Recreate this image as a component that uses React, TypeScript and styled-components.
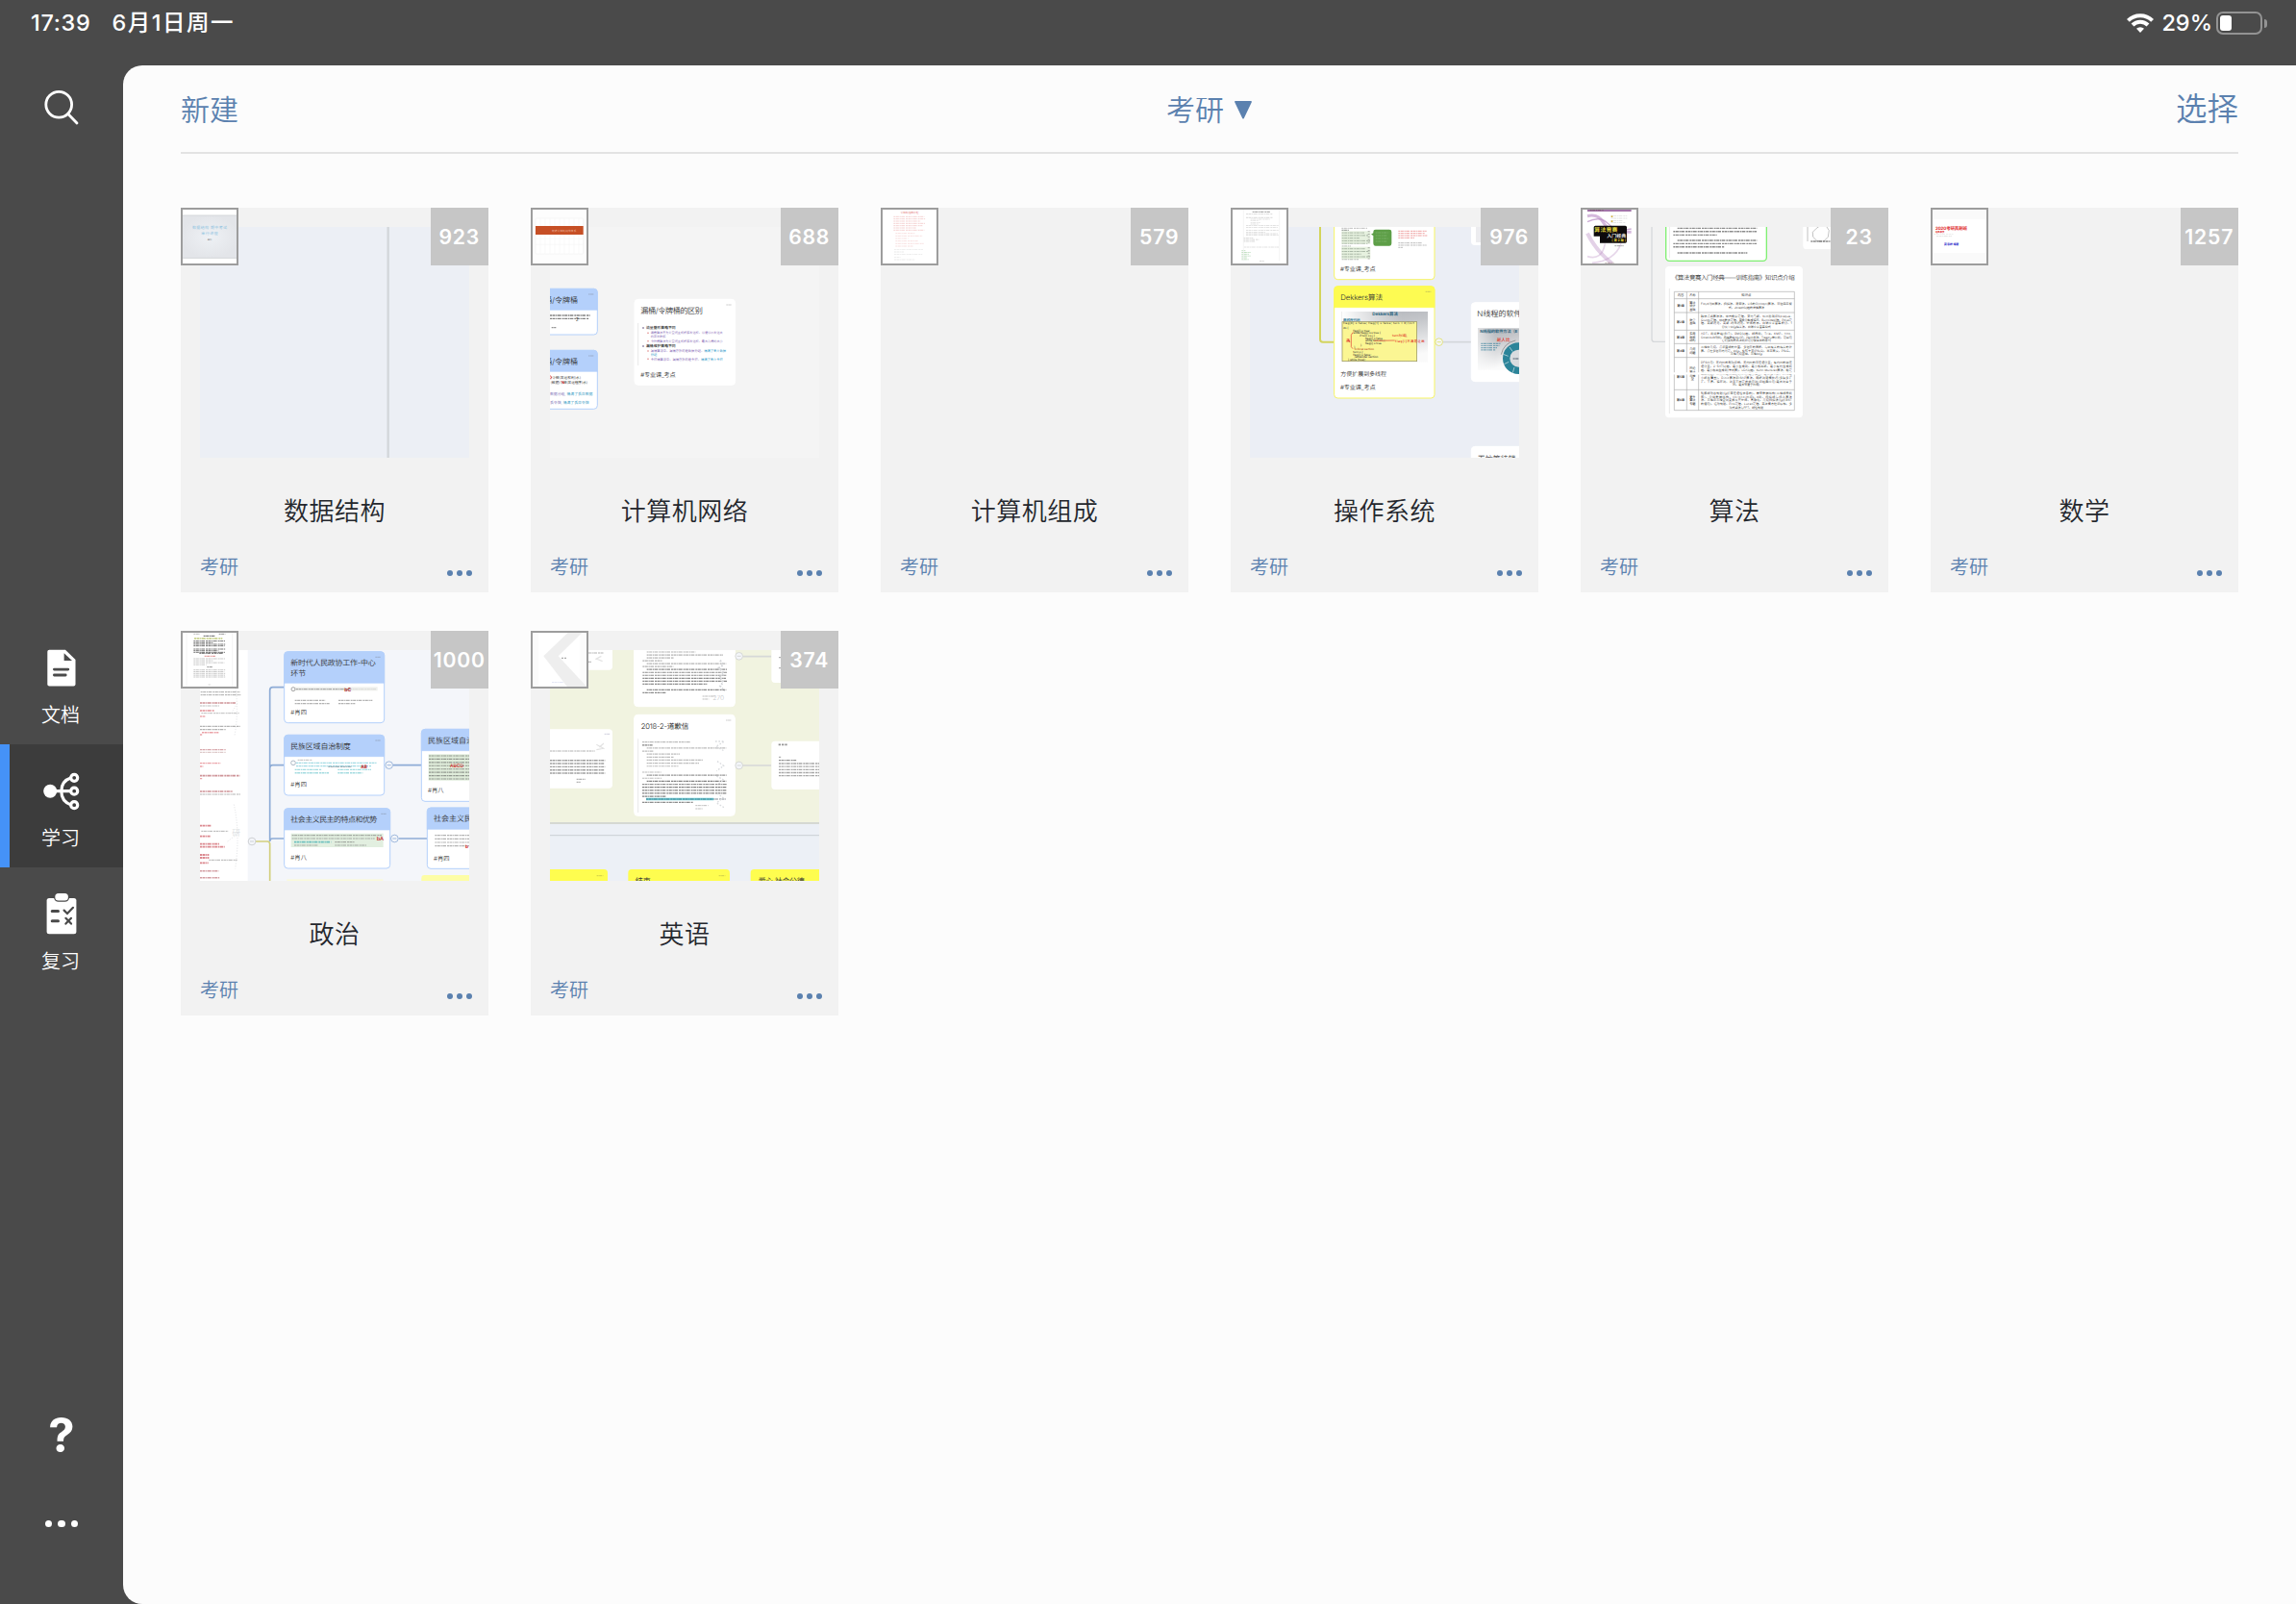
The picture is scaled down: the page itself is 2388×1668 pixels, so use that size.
import React from "react";
import styled, { createGlobalStyle } from "styled-components";

const FONT = `Inter, "Noto Sans CJK SC", sans-serif`;
const LINK = "#5b81af";

const GlobalStyle = createGlobalStyle`
  * { box-sizing: border-box; }
  html, body { margin: 0; padding: 0; }
  body { background: #4a4a4a; font-family: ${FONT}; -webkit-font-smoothing: antialiased; }
`;

/* ---------- shell ---------- */

const Screen = styled.div`
  display: grid;
  grid-template: 68px 1fr / 128px 1fr;
  width: 2388px;
  height: 1668px;
  overflow: hidden;
  background: #4a4a4a;
`;

const StatusBar = styled.header`
  grid-column: 1 / -1;
  display: flex;
  justify-content: space-between;
  height: 48px;
  padding: 0 30px 0 32px;
  color: #fff;
  font-size: 23.5px;
  font-weight: 500;
  line-height: 48px;
`;

const StatusGroup = styled.div<{ $gap: number }>`
  display: flex;
  align-items: center;
  gap: ${(p) => p.$gap}px;
`;

const Clock = styled.span`
  letter-spacing: 0.7px;
`;

const DateText = styled.span`
  font-weight: 450;
  letter-spacing: 1.5px;
`;

const Battery = styled.span`
  display: flex;
  align-items: center;
  gap: 2px;
  margin-left: -4px;
`;

const BatteryShell = styled.span`
  display: block;
  width: 48px;
  height: 24px;
  padding: 2px;
  border: 2px solid #939393;
  border-radius: 7px;
`;

const BatteryLevel = styled.span`
  display: block;
  width: 12px;
  height: 16px;
  border-radius: 3px;
  background: #fff;
`;

const BatteryTip = styled.span`
  width: 3px;
  height: 9px;
  border-radius: 0 4px 4px 0;
  background: #939393;
`;

const Sidebar = styled.nav`
  display: flex;
  flex-direction: column;
  color: #fff;
`;

const SearchButton = styled.div`
  display: flex;
  justify-content: center;
  height: 578px;
  padding-top: 25px;
`;

const NavItem = styled.div<{ $active?: boolean }>`
  display: flex;
  flex-direction: column;
  align-items: center;
  height: 128px;
  padding: 25px 10px 0 0;
  border-left: 10px solid ${(p) => (p.$active ? "#4592f7" : "transparent")};
  background: ${(p) => (p.$active ? "#3c3c3c" : "transparent")};
  background-clip: padding-box;
`;

const NavLabel = styled.span`
  margin: 13px 2px 0 0;
  font-size: 20px;
  font-weight: 350;
  line-height: 24px;
`;

const SidebarFoot = styled.div`
  display: flex;
  flex: 1;
  flex-direction: column;
  align-items: center;
  justify-content: flex-end;
  padding-bottom: 80px;
`;

const Help = styled.span`
  margin-bottom: 62px;
  font-size: 49px;
  font-weight: 700;
  line-height: 52px;
`;

const Dots = styled.span<{ $size: number; $gap: number; $color: string }>`
  display: flex;
  gap: ${(p) => p.$gap}px;
  &::before, &::after, & > i {
    content: "";
    width: ${(p) => p.$size}px;
    height: ${(p) => p.$size}px;
    border-radius: 50%;
    background: ${(p) => p.$color};
  }
`;

const Main = styled.main`
  padding: 0 60px;
  border-radius: 20px 0 0 20px;
  background: #fcfcfc;
`;

const Toolbar = styled.div`
  display: grid;
  grid-template-columns: 1fr auto 1fr;
  align-items: center;
  height: 92px;
  border-bottom: 2px solid #e3e3e3;
  color: ${LINK};
  font-size: 30px;
  font-weight: 350;
  line-height: 92px;
`;

const FolderPicker = styled.div`
  display: flex;
  align-items: center;
  gap: 10px;
`;

const SelectButton = styled.span`
  justify-self: end;
  font-size: 32.5px;
`;

const Shelf = styled.section`
  display: grid;
  grid-template-columns: repeat(6, 320px);
  gap: 40px 44px;
  padding-top: 56px;
`;

/* ---------- notebook card ---------- */

const Card = styled.article`
  position: relative;
  display: flex;
  flex-direction: column;
  height: 400px;
  padding: 20px 20px 0;
  background: #f2f2f2;
`;

const Preview = styled.div<{ $bg: string }>`
  height: 240px;
  overflow: hidden;
  background: ${(p) => p.$bg};
  & > svg { display: block; }
`;

const Cover = styled.div`
  position: absolute;
  top: 0;
  left: 0;
  width: 60px;
  height: 60px;
  background: #fff;
  & > svg { display: block; }
  &::after {
    content: "";
    position: absolute;
    inset: 0;
    border: 2px solid #9d9d9d;
  }
`;

const Count = styled.div`
  position: absolute;
  top: 0;
  right: 0;
  width: 60px;
  height: 60px;
  background: #c6c6c6;
  color: #fff;
  font-size: 21.2px;
  font-weight: 600;
  letter-spacing: 0.8px;
  line-height: 61px;
  text-align: center;
  text-indent: -0.6px;
  white-space: nowrap;
`;

const Title = styled.h2`
  height: 72px;
  margin: 20px 0 0;
  color: #24272d;
  font-size: 26px;
  font-weight: 350;
  letter-spacing: 0.5px;
  line-height: 72px;
  text-align: center;
`;

const CardFoot = styled.div`
  display: flex;
  justify-content: space-between;
  color: ${LINK};
  font-size: 20px;
  font-weight: 350;
  line-height: 44px;
`;

const MoreButton = styled.span`
  display: flex;
  margin: 24.5px -3px 0 0;
`;

/* ---------- drawing helpers (thumbnail units are thirds of a pixel) ---------- */

type XY = { x: number; y: number };

const T = ({ x, y, s, c = "#333", w = 350, len, a, children }: XY & { s: number; c?: string; w?: number; len?: number; a?: "middle" | "end"; children: React.ReactNode }) => (
  <text x={x} y={y} fontSize={s} fill={c} fontWeight={w} textLength={len} textAnchor={a} fontFamily={FONT} textRendering="geometricPrecision">{children}</text>
);

/** A run of print too small to read: a dashed bar with uneven words. */
const Row = ({ x, y, w, c = "#777", h = 4.5, o = 0.75, d = "6 1.5 9 2 4 1.5 11 3" }: XY & { w: number; c?: string; h?: number; o?: number; d?: string }) => (
  <line x1={x} y1={y} x2={x + w} y2={y} stroke={c} strokeWidth={h * 0.85} opacity={o * 0.75} strokeDasharray={d} />
);

const Rows = ({ x, y, widths, step, ...rest }: XY & { widths: number[]; step: number; c?: string; h?: number; o?: number }) => (
  <g>{widths.map((w, i) => <Row key={i} x={x} y={y + i * step} w={w} {...rest} />)}</g>
);

const Node = ({ x, y, w, h, head = 0, color = "#fff", stroke = "#fff" }: XY & { w: number; h: number; head?: number; color?: string; stroke?: string }) => (
  <g>
    <rect x={x} y={y} width={w} height={h} rx={11} fill="#fff" stroke={stroke} strokeWidth={3} />
    {head > 0 && <path d={`M${x} ${y + head}V${y + 11}q0-11 11-11H${x + w - 11}q11 0 11 11V${y + head}z`} fill={color} stroke={color} strokeWidth={2} />}
    <Row x={x + w - 28} y={y + 17} w={17} h={2.5} c="#666" o={0.6} d="5 1 9 1" />
  </g>
);

const Joint = ({ x, y, c }: XY & { c: string }) => (
  <g fill="#f4f6fa" stroke={c} strokeWidth={2.5}>
    <circle cx={x} cy={y} r={11.5} /><path d={`M${x - 6} ${y}h12`} />
  </g>
);

const Canvas = ({ box, children }: { box: string; children?: React.ReactNode }) => (
  <svg width="280" height="240" viewBox={box}>{children}</svg>
);

const CoverArt = ({ children, y = 48 }: { children: React.ReactNode; y?: number }) => (
  <svg width="60" height="60" viewBox={`24 ${y} 180 180`}>{children}</svg>
);

/* ---------- previews ---------- */

const DataStructurePreview = () => (
  <Canvas box="84 108 840 720"><path d="M671 108V828" stroke="#d3d6da" strokeWidth={7} /></Canvas>
);

const NetworkPreview = () => (
  <Canvas box="96 108 840 720">
    <Node x={60} y={301} w={184} h={143} head={66} color="#b4d0fb" stroke="#b4d0fb" />
    <T x={79} y={345} s={24}>桶/令牌桶</T>
    <Rows x={96} y={384} widths={[125, 122]} step={10} c="#222" h={5} />
    <T x={176} y={402} s={15} c="#222">2</T>
    <Row x={101} y={422} w={14} c="#444" />
    <Node x={60} y={493} w={184} h={183} head={66} color="#b4d0fb" stroke="#b4d0fb" />
    <T x={79} y={537} s={24}>桶/令牌桶</T>
    <T x={98} y={583} s={11} c="#222" len={94}>(令牌(发送权利)水)</T>
    <T x={98} y={597} s={11} c="#222" len={115}>(数据)令牌(发送程序)水)</T>
    <path d="M96 572l5 4-4 7M131 589l8 8-3-8" stroke="#d33" strokeWidth={2.5} fill="none" />
    <T x={96} y={633} s={11.5} c="#7b6fb5">数据分组, <tspan fill="#2f97c2">桶满了丢弃数据</tspan></T>
    <T x={96} y={659} s={11.5} c="#7b6fb5">丢令牌, <tspan fill="#2f97c2">桶满了丢弃令牌</tspan></T>
    <Node x={360} y={334} w={314} h={267} />
    <T x={379} y={379} s={24.5} len={194}>漏桶/令牌桶的区别</T>
    <path d="M371 408V540" stroke="#ddd" strokeWidth={2} />
    <T x={396} y={427} s={11.5} c="#222" w={500}>流量整形策略不同</T>
    <T x={410} y={442} s={9.4} c="#7b5cb0">漏桶算法不允许空闲主机积累发送权，以便以后发送大</T>
    <T x={410} y={453} s={9.4} c="#7b5cb0">的突发数据</T>
    <T x={410} y={467} s={9.4} c="#7b5cb0">令牌桶算法允许空闲主机积累发送权，最大为桶的大小</T>
    <T x={396} y={484} s={11.5} c="#222" w={500}>漏桶维护策略不同</T>
    <T x={410} y={499} s={9.8} c="#7b5cb0">漏桶算法中，漏桶存放的是数据分组，<tspan fill="#168fc4">桶满了丢弃数据</tspan></T>
    <T x={410} y={510} s={9.8} c="#168fc4">分组</T>
    <T x={410} y={524} s={9.8} c="#7b5cb0">令牌桶算法中，漏桶存放的是令牌，<tspan fill="#168fc4">桶满了丢弃令牌</tspan></T>
    {[423, 480].map((y) => <circle key={y} cx={387} cy={y} r={2.5} fill="#547" />)}
    {[439, 464, 495, 520].map((y) => <circle key={y} cx={402} cy={y} r={2.3} fill="#d77" />)}
    <T x={379} y={577} s={18.5} len={109}>#专业课_考点</T>
  </Canvas>
);

const SystemPreview = () => (
  <Canvas box="90 108 840 720">
    <path d="M309 100V458q0 9 9 9H352" stroke="#d3d45c" strokeWidth={6} fill="none" />
    <path d="M692 467H780" stroke="#d3d6da" strokeWidth={5} />
    <Node x={353} y={60} w={313} h={212} stroke="#f7f463" />
    <Rows x={376} y={112} widths={[80, 22]} step={6} h={3} />
    <rect x={376} y={121} width={90} height={40} fill="#e6f1df" />
    <rect x={376} y={170} width={90} height={38} fill="#e6f1df" />
    <Rows x={377} y={118} widths={[22, 70, 82, 55, 88, 80, 28, 72, 86, 60, 88, 52]} step={8.3} h={3} c="#687868" />
    <Rows x={458} y={122} widths={[6, 6, 6, 6, 6, 0, 6, 6, 6, 6, 6]} step={8.5} h={3} c="#666" />
    <path d="M482 116H525q7 0 7 7V160q0 7-7 7H482q-7 0-7-7V135l-7-4 7-4v-4q0-7 7-7z" fill="#5d9e47" />
    <Rows x={482} y={126} widths={[40, 38, 40, 36]} step={9} h={2} c="#b5d9a8" />
    <Rows x={553} y={121} widths={[88, 82, 90, 50]} step={7} h={3.5} c="#e45a5a" />
    <Rows x={553} y={158} widths={[76, 88, 14]} step={7} h={3} />
    <T x={372} y={247} s={18.5} len={110}>#专业课_考点</T>
    <Node x={353} y={293} w={313} h={349} head={66} color="#fdfb52" stroke="#f7f463" />
    <T x={373} y={336} s={23.5} len={132}>Dekkers算法</T>
    <defs>
      <linearGradient id="slide" x1="0" y1="0" x2="0.25" y2="1">
        <stop offset="0" stopColor="#b0b3b8" /><stop offset="0.35" stopColor="#c3c5c9" /><stop offset="1" stopColor="#fafafa" />
      </linearGradient>
      <linearGradient id="slideLeft" x1="0" x2="1"><stop offset="0" stopColor="#fff" /><stop offset="0.7" stopColor="#fff" stopOpacity="0" /></linearGradient>
    </defs>
    <rect x={376} y={372} width={269} height={158} fill="url(#slide)" />
    <rect x={376} y={372} width={269} height={158} fill="url(#slideLeft)" />
    <T x={472} y={385} s={13.5} c="#2c6580" w={700} len={80}>Dekkers算法</T>
    <T x={381} y={401} s={10.5} c="#357b98" w={700}>两线程代码</T>
    <rect x={378} y={404} width={233} height={123} fill="#fbf693" stroke="#8f8d58" strokeWidth={2} />
    <g>
      <T x={381} y={412} s={8.5} len={222} w={500}>flag[0] = false; flag[1] = false; turn = 0;//or1</T>
      <T x={381} y={427} s={8.5} w={500}>do {"{"}</T>
      <T x={412} y={434} s={8.5} w={500}>flag[i] = true;</T>
      <T x={412} y={442} s={8.5} w={500}>while flag[j] == true {"{"}</T>
      <T x={432} y={450} s={8.5} w={500}>if turn == j {"{"}</T>
      <T x={450} y={458} s={8.5} w={500}>flag[i] = false</T>
      <T x={450} y={466} s={8.5} w={500}>while turn == j ;</T>
      <T x={450} y={474} s={8.5} w={500}>flag[i] = true</T>
      <T x={435} y={479} s={8.5} w={500}>{"}"}</T>
      <T x={415} y={486} s={8.5} w={500}>{"}"}</T>
      <T x={416} y={493} s={8.5} c="#b63c22" w={500}>Critical section</T>
      <T x={412} y={502} s={8.5} w={500}>turn = j;</T>
      <T x={412} y={509} s={8.5} w={500}>flag[i] = false;</T>
      <T x={416} y={516} s={8.5} w={500}>remainder section</T>
      <T x={396} y={524} s={8.5} w={500}>{"}"} while (true);</T>
    </g>
    <g stroke="#df3b30" strokeWidth={2} fill="none"><path d="M411 437l-5 8v37l5 6M392 463h10M396 457l6 11M478 463l64-1" /></g>
    <T x={389} y={469} s={14} c="#df3b30">表</T>
    <T x={534} y={451} s={10} c="#e0281f" w={500}>turn为i或j,</T>
    <T x={543} y={467} s={10} c="#e0281f" w={500} len={92}>flag[i]不满足让出</T>
    <T x={373} y={573} s={18} len={143}>方便扩展到多线程</T>
    <T x={372} y={615} s={18.5} len={110}>#专业课_考点</T>
    <Joint x={680} y={467} c="#dedf68" />
    <rect x={780} y={60} width={200} height={105} rx={12} fill="#fff" />
    <rect x={795} y={108} width={30} height={48} fill="#ececef" />
    <Node x={781} y={344} w={200} h={246} />
    <T x={799} y={388} s={24}>N线程的软件方法</T>
    <rect x={801} y={424} width={130} height={130} fill="url(#slide)" />
    <rect x={801} y={424} width={80} height={130} fill="url(#slideLeft)" opacity={0.6} />
    <T x={808} y={438} s={12.5} c="#28617b" w={700}>N线程的软件方法（E</T>
    <T x={860} y={465} s={14} c="#e0352b" w={500}>是人比</T>
    <Rows x={811} y={472} widths={[62, 58, 50, 46]} step={6.5} c="#2b7896" h={4} />
    <path d="M874 506q8-36 45-44" stroke="#777" strokeWidth={2} fill="none" />
    <circle cx={928} cy={518} r={38} fill="#d9dcdf" stroke="#2b8499" strokeWidth={22} />
    <path d="M900 483l10 14M880 505l16 6M883 536l15-7M910 563l5-17" stroke="#d9e7eb" strokeWidth={2} />
    <Row x={911} y={519} w={20} c="#345" />
    <Node x={781} y={793} w={200} h={90} />
    <T x={800} y={839} s={24}>无忙等待锁</T>
  </Canvas>
);

const TABLE: { top: number; h: number; a: string; b: string[]; lines: string[] }[] = [
  { top: 332, h: 43, a: "第1章", b: ["算法", "设计", "基础"], lines: ["Floyd判圈算法、扫描法、滑窗法、LIS的O(nlogn)算法、双边四平衡", "式、Joseph问题的递推算法"] },
  { top: 375, h: 55, a: "第2章", b: ["数学", "基础"], lines: ["韩信点兵算法法、中国剩余定理、莫比乌斯、Nim游戏和Sprague-", "Grundy定理、母函数大定理、置换分解成循环、Burnside引理、Polya定", "理、高斯消元、高斯-约当消元、矩阵的幂、自适应辛普森积分、1", "分及至凸包相关法、自适应辛普森公式"] },
  { top: 430, h: 42, a: "第3章", b: ["实用", "数据", "结构"], lines: ["ADT、树状数组(BIT)、RMQ问题、线段树、Trie、KMP、Aho-", "Corasick自动机、后缀数组及LCP、Hash方法、Treap与伸展树、可以用", "它们实现的名次树和可分裂合并的序列"] },
  { top: 472, h: 43, a: "第4章", b: ["几何", "问题"], lines: ["二维中几何、点和直线的位置、多边形的面积、与圆有关的相关的计", "算、点在多边形内判定、凸包、旋转卡壳(PSLG)、半平面交、PSLG、", "三维几何基础、三维凸包"] },
  { top: 515, h: 101, a: "第5章", b: ["图论", "算法", "与模", "型"], lines: ["DFS应用：无向图的割顶和桥、无向图的双连通分量、有向图的强连", "通分量、2-SAT问题、最小生成树、最小瓶颈路、最小有向生成树", "题、最小瓶颈生成树(朱刘算)、LCA问题、Kuhn-Munkres算法、稳定", "婚姻问题、二分图最大匹配的应用(最小覆盖、最大独立集、DAG最", "小路径覆盖)、Dinic算法和ISAP算法、网络流建模技巧(多源多汇", "汇、下界、循环流、流量不固定的费用流)和经典应用(最大闭合子", "图、最大密度子图等)"] },
  { top: 616, h: 64, a: "第6章", b: ["更多", "算法", "专题"], lines: ["轮廓线动态规划(包括带连通性信息的)、嵌套数据结构(二维线段树", "等)、分块数据结构、Voronoi图和k-d树、扫描线与扫入算法", "法、三维和三维空间变换及其矩阵、离散化、几何扫描法(包括BST", "的使用)、运动规划、Pick定理、Lucas定理、高次模方程和原根、多", "项式乘法与FFT、线性规划"] },
];

const AlgorithmPreview = () => (
  <Canvas box="84 108 840 720">
    <path d="M246 100V458q0 8 8 8H292" stroke="#d6d8db" strokeWidth={4} fill="none" />
    <rect x={290} y={60} width={314} height={154} rx={11} fill="#fff" stroke="#80ef72" strokeWidth={4} />
    <path d="M301 108V205" stroke="#ddd" strokeWidth={2} />
    <g>
      <Row x={326} y={112} w={248} c="#333" h={5} />
      <Row x={313} y={122} w={260} c="#333" h={5} />
      <Row x={313} y={133} w={136} c="#333" h={5} />
      <Row x={326} y={150} w={248} c="#333" h={5} />
      <Row x={313} y={160} w={260} c="#333" h={5} />
      <Row x={313} y={170} w={160} c="#333" h={5} />
      <Row x={326} y={189} w={218} c="#333" h={5} />
    </g>
    <rect x={718} y={60} width={220} height={117} rx={10} fill="#fff" />
    <path d="M760 112l14-10 16 3 9 14-3 20-14 14-20-1-13-13-1-15zM732 108v45" stroke="#999" strokeWidth={1.8} fill="none" />
    <Row x={742} y={153} w={64} c="#333" />
    <rect x={288} y={231} width={429} height={472} rx={12} fill="#fff" />
    <T x={308} y={272} s={19.5} len={384} c="#3a3a3a">《算法竞赛入门经典——训练指南》知识点介绍</T>
    <path d="M301 300V690" stroke="#ddd" strokeWidth={2} />
    <path d="M316 310H691V680H316zM355 310V680M392 310V680M316 332H691M316 375H691M316 430H691M316 472H691M316 515H691M316 616H691" stroke="#aaa" strokeWidth={2} fill="none" />
    <T x={336} y={325} s={10} a="middle" c="#111">内容</T>
    <T x={373} y={325} s={10} a="middle" c="#111">名称</T>
    <T x={541} y={325} s={10} a="middle" c="#111">知识点</T>
    {TABLE.map((r) => {
      const mid = r.top + r.h / 2;
      const step = r.lines.length > 5 ? 11.6 : 10.8;
      return (
        <g key={r.top}>
          <T x={336} y={mid + 4 + (r.h > 90 ? 8 : 0)} s={9.5} a="middle" c="#111" w={500}>{r.a}</T>
          {r.b.map((t, i) => <T key={i} x={373} y={mid + 4 + (i - (r.b.length - 1) / 2) * 11} s={9.5} a="middle" c="#111">{t}</T>)}
          {r.lines.map((t, i) => {
            const last = i === r.lines.length - 1;
            return <T key={i} x={541} y={mid + 4 + (i - (r.lines.length - 1) / 2) * step} s={9} a="middle" c="#222" len={last ? undefined : 284}>{t}</T>;
          })}
        </g>
      );
    })}
    <path d="M310 565H696" stroke="#fff" strokeWidth={7} />
  </Canvas>
);

const BLUE = "#b4d0fb";
const WIRE = "#8eacd6";

const PoliticsPreview = () => (
  <Canvas box="84 93 840 720">
    <rect x={84} y={93} width={149} height={720} fill="#fff" />
    <g fill="none" stroke="#dfe1e4" strokeWidth={3} strokeDasharray="3 5">
      <path d="M190 180q18 90 2 180M190 575q20 90 4 200M170 690l34-26M200 260l-18 30" />
    </g>
    <T x={184} y={672} s={26} c="#dddfe2">研</T>
    <Rows x={86} y={224} widths={[123, 125]} step={9} c="#666" h={3.5} />
    <Row x={84} y={258} w={112} c="#a93f47" h={6} />
    <Row x={84} y={267} w={60} h={3} />
    <Row x={84} y={282} w={44} c="#cc3c47" h={6} />
    <Row x={88} y={290} w={118} h={3} />
    <Row x={84} y={300} w={16} c="#e06a72" />
    <Row x={84} y={331} w={125} h={4} />
    <Row x={84} y={341} w={80} h={4} />
    <Row x={90} y={350} w={52} c="#dc5a64" h={5} />
    <Row x={84} y={357} w={8} c="#dc5a64" />
    <Row x={84} y={404} w={80} c="#b9626a" />
    <Row x={84} y={412} w={80} c="#a77" h={3} />
    <Row x={84} y={446} w={64} c="#dc5a64" h={4} />
    <Row x={84} y={456} w={10} c="#dc5a64" />
    <Row x={84} y={485} w={124} c="#a93f47" h={6} />
    <Row x={84} y={494} w={8} c="#dc5a64" />
    <Row x={84} y={534} w={102} c="#a93f47" h={6} />
    <Row x={84} y={543} w={126} h={3.5} />
    <Row x={84} y={641} w={34} c="#c02d39" h={6} />
    <Row x={88} y={658} w={84} h={3.5} />
    <Row x={84} y={674} w={32} c="#c02d39" h={6} />
    <Row x={84} y={698} w={60} c="#c02d39" h={6} />
    <Row x={84} y={707} w={78} c="#c02d39" h={6} />
    <Rows x={84} y={732} widths={[28, 28]} step={9} c="#c02d39" h={7} />
    <Row x={112} y={748} w={88} h={3.5} />
    <Row x={84} y={757} w={26} c="#c02d39" h={6} />
    <Row x={84} y={782} w={58} c="#b2525a" h={5} />
    <Row x={84} y={803} w={62} c="#b2525a" h={5} />
    <path d="M302 690V218q0-9 9-9H346M302 461q0-9 9-9H346M302 690q0-9 9-9H346M686 452H775M704 681H792" stroke={WIRE} strokeWidth={5} fill="none" />
    <path d="M258 690H294q8 0 8 8V813" stroke="#d2cf7d" strokeWidth={5} fill="none" />
    <Joint x={246} y={690} c="#c6c9cc" />

    <Node x={347} y={98} w={312} h={222} head={98} color={BLUE} stroke={BLUE} />
    <T x={367} y={141} s={24} len={265}>新时代人民政协工作-中心</T>
    <T x={367} y={174} s={24}>环节</T>
    <rect x={380} y={208} width={258} height={12} fill="#eff0ed" />
    <Row x={384} y={215} w={172} h={4} /><Row x={560} y={215} w={76} h={3} o={0.25} />
    <circle cx={375} cy={215} r={6} fill="none" stroke="#777" strokeWidth={2} />
    <T x={535} y={221} s={15} c="#a6201a" w={700}>bC</T>
    <Rows x={380} y={250} widths={[95, 108]} step={10} h={4} />
    <Rows x={516} y={250} widths={[106, 52]} step={10} h={4} />
    <T x={367} y={294} s={19}>#肖四</T>

    <Node x={347} y={358} w={312} h={188} head={67} color={BLUE} stroke={BLUE} />
    <T x={367} y={402} s={24} len={187}>民族区域自治制度</T>
    <circle cx={375} cy={445} r={7} fill="none" stroke="#89a" strokeWidth={2} />
    <Row x={389} y={436} w={45} h={3} />
    <Rows x={384} y={445} widths={[252, 234]} step={10} c="#5cc0d0" h={4} />
    <Row x={484} y={457} w={72} c="#345" h={3} />
    <T x={586} y={461} s={14} c="#b6201a" w={700}>AB</T>
    <Rows x={380} y={466} widths={[84, 106]} step={10} c="#5cc0c8" h={5} />
    <Rows x={514} y={466} widths={[104, 78]} step={10} c="#5cc0c8" h={5} />
    <T x={367} y={519} s={19}>#肖四</T>

    <Node x={347} y={587} w={330} h={187} head={67} color={BLUE} stroke={BLUE} />
    <T x={367} y={631} s={24} len={270}>社会主义民主的特点和优势</T>
    <rect x={368} y={665} width={288} height={43} fill="#e2efe0" />
    <Rows x={371} y={671} widths={[280, 258]} step={10} h={4} />
    <Row x={378} y={692} w={115} c="#1aa0a7" h={6} /><Row x={505} y={692} w={62} h={4} />
    <Row x={378} y={702} w={73} h={4} /><Row x={505} y={702} w={98} h={4} />
    <T x={635} y={687} s={17} c="#c5251f" w={500}>bA</T>
    <T x={367} y={748} s={19}>#肖八</T>

    <Node x={775} y={340} w={260} h={225} head={67} color={BLUE} stroke={BLUE} />
    <T x={795} y={385} s={24}>民族区域自治制度</T>
    <rect x={797} y={418} width={140} height={82} fill="#dfecda" />
    <Rows x={798} y={423} widths={[126, 126, 126, 126, 126, 126, 126, 126]} step={10.3} c="#555" h={4} />
    <T x={864} y={460} s={15} c="#d8261e" w={500}>ABCD</T>
    <T x={795} y={538} s={19}>#肖八</T>
    <Node x={793} y={585} w={250} h={190} head={67} color={BLUE} stroke={BLUE} />
    <T x={813} y={628} s={24}>社会主义民主</T>
    <Rows x={817} y={671} widths={[108, 108, 108, 108]} step={11} h={4} />
    <T x={912} y={710} s={14} c="#d8261e" w={700}>b</T>
    <T x={813} y={750} s={19}>#肖四</T>
    <Joint x={674} y={452} c={WIRE} />
    <Joint x={691} y={681} c={WIRE} />
    <rect x={355} y={808} width={300} height={20} fill="#fafadb" />
    <rect x={775} y={795} width={200} height={30} rx={9} fill="#fdfda6" />
  </Canvas>
);

const EnglishPreview = () => (
  <Canvas box="84 93 840 720">
    <rect x={84} y={93} width={840} height={540} fill="#f1f3e0" />
    <path d="M84 633H924" stroke="#d5d8d3" strokeWidth={6} />
    <path d="M84 671H924" stroke="#d0d5da" strokeWidth={4} />
    <path d="M686 113H775M686 453H775" stroke="#d6d8d8" strokeWidth={5} />
    <rect x={40} y={60} width={239} height={95} rx={11} fill="#fff" />
    <Rows x={196} y={102} widths={[56, 8]} step={10} h={4} /><Row x={203} y={130} w={10} />
    <path d="M228 120l20 8M244 112l-18 10" stroke="#e4e4e4" strokeWidth={4} />
    <Node x={347} y={30} w={314} h={239} />
    <g>
      {[[386, 153], [386, 238], [386, 85], [373, 62], [386, 248], [373, 96], [386, 250], [373, 263], [373, 261], [373, 260], [373, 263], [373, 201], [373, 0], [386, 248], [373, 72]].map(([x, w], i) => (
        <Row key={i} x={x} y={99 + i * 9.1} w={w} c={i > 5 ? "#333" : "#777"} h={4.2} />
      ))}
      <Row x={560} y={237} w={40} h={3} /><Row x={560} y={246} w={20} h={3} />
    </g>
    <path d="M615 125l10 14-14 10 16 16-14 12 12 16-10 12 14 16" stroke="#d3d5d8" strokeWidth={6} fill="none" strokeDasharray="5 5" />
    <T x={592} y={249} s={20} c="#c3c5c8">270</T>

    <Node x={347} y={295} w={314} h={315} />
    <T x={368} y={339} s={23} len={149} c="#222">2018-2-道歉信</T>
    <path d="M359 370V600" stroke="#ddd" strokeWidth={2} />
    <g>
      {[[372, 152, 0], [372, 32, 2], [386, 248, 0], [372, 34, 0], [386, 103, 0], [386, 85, 0], [386, 175, 0], [386, 163, 0], [386, 100, 0], [0, 0, 0], [372, 59, 0], [386, 249, 1], [372, 62, 0], [386, 248, 2], [372, 263, 1], [372, 262, 2], [372, 262, 2], [372, 262, 2], [372, 74, 2]].map(([x, w, k], i) => (
        <Row key={i} x={x} y={380 + i * 9.4} w={w} c={k === 2 ? "#222" : k === 1 ? "#444" : "#888"} h={4.2} />
      ))}
      <Row x={384} y={558} w={211} c="#2fc0cf" h={8} o={0.9} d="none" />
      <Row x={384} y={558} w={249} c="#234" h={4} />
      <Row x={372} y={568} w={158} c="#333" h={4} />
      <Row x={538} y={578} w={40} h={3} /><Row x={538} y={588} w={22} h={3} />
    </g>
    <path d="M600 378h28l-26 16 26 14M606 440l20 14-22 16M604 486l22 12-18 14M606 540l18 14-20 16 26 16" stroke="#d9dbde" strokeWidth={4} fill="none" strokeDasharray="5 5" />

    <rect x={40} y={340} width={239} height={184} rx={11} fill="#fff" />
    <Row x={254} y={355} w={17} h={2.5} c="#88a" />
    <Row x={84} y={408} w={140} h={4} />
    <path d="M229 388l22 12-22 4M252 384l-14 12" stroke="#e2e2e2" strokeWidth={3.5} fill="none" />
    <Rows x={84} y={437} widths={[172, 170, 172, 170, 172]} step={10} h={5} c="#555" />
    <Rows x={167} y={496} widths={[27, 12]} step={9} h={4} />

    <rect x={775} y={40} width={200} height={155} rx={11} fill="#fff" />
    <Row x={798} y={116} w={8} /><Row x={798} y={149} w={8} />
    <rect x={775} y={377} width={200} height={151} rx={11} fill="#fff" />
    <Row x={797} y={388} w={27} c="#444" h={6} d="7 3" />
    <Row x={798} y={427} w={8} /><Row x={798} y={437} w={56} c="#444" />
    <Rows x={798} y={447} widths={[126, 126, 126, 126, 126]} step={9.5} h={4.5} c="#666" />
    <Joint x={674} y={112} c="#cfd1cf" />
    <Joint x={674} y={453} c="#cfd1cf" />

    {[[0, 264], [328, 645], [710, 1000]].map(([a, b]) => (
      <g key={a}><rect x={a} y={777} width={b - a} height={60} rx={11} fill="#fefd4f" /><Row x={b - 34} y={797} w={20} h={2.5} c="#884" /></g>
    ))}
    <T x={350} y={821} s={24} w={400}>结束</T>
    <T x={734} y={821} s={24} w={400} len={144}>爱心,社会公德</T>
  </Canvas>
);

/* ---------- covers ---------- */

const DataCover = () => (
  <CoverArt>
    <defs><radialGradient id="mist"><stop offset="0" stopColor="#eef1f5" /><stop offset="1" stopColor="#e3e5e9" /></radialGradient></defs>
    <rect x={24} y={72} width={180} height={133} fill="url(#mist)" />
    <path d="M24 72H204M24 205H204" stroke="#d4d6d9" strokeWidth={3} />
    <T x={60} y={113} s={12} c="#86bede" len={108}>数据结构 期中考试</T>
    <T x={88} y={132} s={12} c="#86bede" len={52}>串行讲座</T>
    <T x={107} y={149} s={7} c="#777">单科</T>
  </CoverArt>
);

const NetworkCover = () => (
  <CoverArt>
    <rect x={24} y={48} width={180} height={180} fill="#fdfdfd" />
    <rect x={39} y={81} width={149} height={111} rx={3} fill="#fff" stroke="#ececec" strokeWidth={1.5} />
    <path d="M54 82V191M69 82V191M84 82V191M99 82V191M114 82V191M129 82V191M144 82V191M159 82V191M174 82V191M39 145H188M39 163H188" stroke="#f0f0f0" strokeWidth={1} />
    <rect x={39} y={105} width={149} height={27} fill="#c64f25" />
    <T x={90} y={122} s={8} c="#f1c2ad" len={76}>概述计算机网络体系</T>
  </CoverArt>
);

const CompositionCover = () => (
  <CoverArt>
    <T x={114} y={66} s={8} c="#d66" a="middle">计算机组成原理</T>
    <Rows x={64} y={76} widths={[96, 100, 84, 98, 90, 70, 96]} step={7} c="#e79696" h={3} o={0.65} />
    <Rows x={70} y={128} widths={[60, 84, 40, 70, 88, 56]} step={8} c="#e79696" h={2.5} o={0.55} />
    <Rows x={66} y={178} widths={[90, 30, 88, 20, 64]} step={8} h={2} o={0.35} />
  </CoverArt>
);

const SystemCover = () => (
  <CoverArt>
    <Row x={92} y={61} w={56} c="#555" h={3.5} />
    <Rows x={72} y={68} widths={[82, 0, 84]} step={5.5} h={2.5} o={0.5} />
    <Rows x={86} y={84} widths={[60, 26, 30, 26]} step={5} h={2} o={0.5} />
    <Rows x={72} y={104} widths={[102, 100, 0, 102, 60, 100, 102]} step={5} h={2.2} o={0.55} />
    <Rows x={64} y={142} widths={[30, 48, 36]} step={5.5} h={2.2} o={0.6} />
    <Row x={66} y={171} w={108} h={2} o={0.5} />
    <Rows x={58} y={182} widths={[12, 28, 24, 28, 18, 22]} step={5.5} c="#69b36a" h={2.5} />
    <path d="M64 54V214M176 54V214" stroke="#eee" strokeWidth={2} />
    <Row x={114} y={214} w={14} h={2} />
  </CoverArt>
);

const AlgorithmCover = () => (
  <CoverArt>
    <path d="M45 50H182V60H45z" fill="#a274a8" />
    <Row x={53} y={56} w={42} c="#543" h={3} />
    <g fill="none" stroke="#b98bc4">
      <path d="M45 74Q80 66 96 96T182 124" strokeWidth={9} opacity={0.6} />
      <path d="M45 92Q86 72 110 98T182 114" strokeWidth={4} opacity={0.7} />
      <path d="M45 128Q70 180 122 222" strokeWidth={12} opacity={0.4} />
      <path d="M45 200Q90 214 100 160M60 220Q130 214 150 160" strokeWidth={5} opacity={0.35} />
    </g>
    <Rows x={119} y={74} widths={[50, 50, 36, 44]} step={7} h={2} o={0.5} />
    <rect x={119} y={73} width={5} height={5} fill="#d4b13f" /><rect x={119} y={88} width={5} height={5} fill="#d4b13f" />
    <path d="M70 104H163q5 0 5 5V153q0 5-5 5H84V137H65V109q0-5 5-5z" fill="#0d0a0c" />
    <T x={67} y={123} s={17.5} c="#e5d83d" w={700} len={72}>算法竞赛</T>
    <T x={106} y={140} s={15} c="#fff" w={500} len={60}>入门经典</T>
    <T x={121} y={154} s={10} c="#e5d83d" w={700} len={44}>(第2版)</T>
    <Row x={130} y={167} w={28} h={3} c="#444" />
    <Row x={100} y={220} w={28} h={3} c="#866" />
  </CoverArt>
);

const MathCover = () => (
  <CoverArt>
    <rect x={24} y={48} width={180} height={36} fill="#fafafa" /><rect x={24} y={189} width={180} height={39} fill="#fafafa" />
    <T x={39} y={118} s={13.5} c="#e01d25" w={700} len={99}>2020考研真题班</T>
    <T x={39} y={127} s={7} c="#e01d25" w={700}>经典教学</T>
    <Row x={34} y={130} w={62} h={2} o={0.4} /><Row x={42} y={137} w={48} h={3} o={0.35} />
    <T x={66} y={166} s={9} c="#2323c9" w={700} len={46}>武忠祥 编著</T>
  </CoverArt>
);

const PoliticsCover = () => (
  <CoverArt y={33}>
    <path d="M42 33V213M185 33V213" stroke="#eee" strokeWidth={2} />
    <Row x={64} y={43} w={20} h={3} /><Row x={143} y={43} w={20} h={3} c="#222" />
    <Row x={95} y={49} w={38} c="#222" h={4} />
    <Row x={66} y={57} w={88} c="#93a51e" h={5} />
    <Rows x={64} y={65} widths={[98, 60, 100, 97, 0, 100, 78, 98]} step={5} c="#222" h={3.4} o={0.85} />
    <Row x={82} y={103} w={76} c="#222" h={4} />
    <Row x={98} y={112} w={34} c="#c43a3a" h={3.5} />
    <Rows x={64} y={120} widths={[98, 60, 96, 40]} step={6.2} h={2.5} />
    <Row x={106} y={146} w={17} c="#222" h={3} />
    <Rows x={64} y={155} widths={[100, 96, 100, 98, 100]} step={5.5} h={2.5} />
    <Row x={110} y={201} w={8} h={2} />
  </CoverArt>
);

const EnglishCover = () => (
  <CoverArt y={33}>
    <rect x={24} y={33} width={180} height={180} fill="#fbfbfb" /><rect x={48} y={33} width={130} height={180} fill="#fff" />
    <path d="M146 33L64 112 142 213H204L110 112 190 33z" fill="#eeeeee" />
    <Row x={121} y={118} w={15} c="#222" h={4} d="4 5" />
    <Row x={90} y={193} w={36} c="#99a4d8" h={2} />
  </CoverArt>
);

/* ---------- icons ---------- */

const SearchIcon = () => (
  <svg width="38" height="38" viewBox="0 0 38 38" fill="none" stroke="#fff" strokeWidth="2.8" strokeLinecap="round">
    <circle cx="16.2" cy="15.7" r="13.4" /><path d="M25.8 25.6 35 35" />
  </svg>
);

const WifiIcon = () => (
  <svg width="28" height="20" viewBox="0 0 28 20" fill="none" stroke="#fff" strokeWidth="4">
    <path d="M1.4 7.400a17.800 17.800 0 0 1 25.200 0M6 12a11.300 11.300 0 0 1 16 0" />
    <path d="M14 20l-4-4.200a5.800 5.800 0 0 1 8 0z" fill="#fff" stroke="none" />
  </svg>
);

const DocumentIcon = () => (
  <svg width="44" height="48" viewBox="0 0 44 48">
    <path d="M10 4.800H26L36.500 15V40.500q0 2-2 2H9.300q-2 0-2-2V6.800q0-2 2-2z" fill="#fff" />
    <path d="M24.600 8.200V16.100H33" fill="#4a4a4a" />
    <path d="M14.400 25.100H28.800M14.400 31H26.200" stroke="#4a4a4a" strokeWidth="2.800" strokeLinecap="round" />
  </svg>
);

const StudyIcon = () => (
  <svg width="44" height="48" viewBox="0 0 44 48" fill="none" stroke="#fff" strokeWidth="3.200">
    <circle cx="10.200" cy="23.700" r="7" fill="#fff" stroke="none" />
    <path d="M14 23.700H32M32 9.700C25 12 21.800 17 21.800 23.700S25 35.500 32 38" />
    <g fill="#3c3c3c"><circle cx="35.200" cy="9.800" r="3.500" /><circle cx="35.200" cy="23.700" r="3.500" /><circle cx="35.200" cy="38.200" r="3.500" /></g>
  </svg>
);

const ReviewIcon = () => (
  <svg width="44" height="48" viewBox="0 0 44 48">
    <rect x="6.600" y="7" width="30.800" height="37.300" rx="2.500" fill="#fff" />
    <rect x="15.300" y="2" width="13.600" height="7.500" rx="3.500" fill="#fff" stroke="#4a4a4a" strokeWidth="2.600" paintOrder="stroke" />
    <g fill="none" stroke="#4a4a4a" strokeLinecap="round">
      <path d="M12.200 20.600H18.500M12.200 30.700H18.500" strokeWidth="3" />
      <path d="M24.600 19.600l3.400 3.400 6-6.200M26.400 27.800l5.600 5.800M32 27.800l-5.600 5.800" strokeWidth="2.200" />
    </g>
  </svg>
);

const Triangle = () => (
  <svg width="20" height="20" viewBox="0 0 20 20"><path d="M2 1.800H18L10 18.600z" fill={LINK} stroke={LINK} strokeWidth="1.800" strokeLinejoin="round" /></svg>
);

/* ---------- page ---------- */

const NOTEBOOKS = [
  { title: "数据结构", count: 923, bg: "#eceff5", Art: DataStructurePreview, CoverImg: DataCover },
  { title: "计算机网络", count: 688, bg: "#f4f4f4", Art: NetworkPreview, CoverImg: NetworkCover },
  { title: "计算机组成", count: 579, bg: "#f2f2f2", Art: null, CoverImg: CompositionCover },
  { title: "操作系统", count: 976, bg: "#ebeef5", Art: SystemPreview, CoverImg: SystemCover },
  { title: "算法", count: 23, bg: "#f2f2f2", Art: AlgorithmPreview, CoverImg: AlgorithmCover },
  { title: "数学", count: 1257, bg: "#f2f2f2", Art: null, CoverImg: MathCover },
  { title: "政治", count: 1000, bg: "#f4f6fa", Art: PoliticsPreview, CoverImg: PoliticsCover },
  { title: "英语", count: 374, bg: "#ecf0f6", Art: EnglishPreview, CoverImg: EnglishCover },
];

export default function App() {
  return (
    <>
      <GlobalStyle />
      <Screen lang="zh-CN">
        <StatusBar>
          <StatusGroup $gap={22}>
            <Clock>17:39</Clock>
            <DateText>6月1日周一</DateText>
          </StatusGroup>
          <StatusGroup $gap={8}>
            <WifiIcon />
            <span>29%</span>
            <Battery>
              <BatteryShell><BatteryLevel /></BatteryShell>
              <BatteryTip />
            </Battery>
          </StatusGroup>
        </StatusBar>

        <Sidebar>
          <SearchButton><SearchIcon /></SearchButton>
          <NavItem><DocumentIcon /><NavLabel>文档</NavLabel></NavItem>
          <NavItem $active><StudyIcon /><NavLabel>学习</NavLabel></NavItem>
          <NavItem><ReviewIcon /><NavLabel>复习</NavLabel></NavItem>
          <SidebarFoot>
            <Help>?</Help>
            <Dots $size={7.5} $gap={6} $color="#fff"><i /></Dots>
          </SidebarFoot>
        </Sidebar>

        <Main>
          <Toolbar>
            <span>新建</span>
            <FolderPicker>考研<Triangle /></FolderPicker>
            <SelectButton>选择</SelectButton>
          </Toolbar>
          <Shelf>
            {NOTEBOOKS.map(({ title, count, bg, Art, CoverImg }) => (
              <Card key={title}>
                <Preview $bg={bg}>{Art && <Art />}</Preview>
                <Title>{title}</Title>
                <CardFoot>
                  <span>考研</span>
                  <MoreButton><Dots $size={6.4} $gap={3.4} $color={LINK}><i /></Dots></MoreButton>
                </CardFoot>
                <Cover><CoverImg /></Cover>
                <Count>{count}</Count>
              </Card>
            ))}
          </Shelf>
        </Main>
      </Screen>
    </>
  );
}
